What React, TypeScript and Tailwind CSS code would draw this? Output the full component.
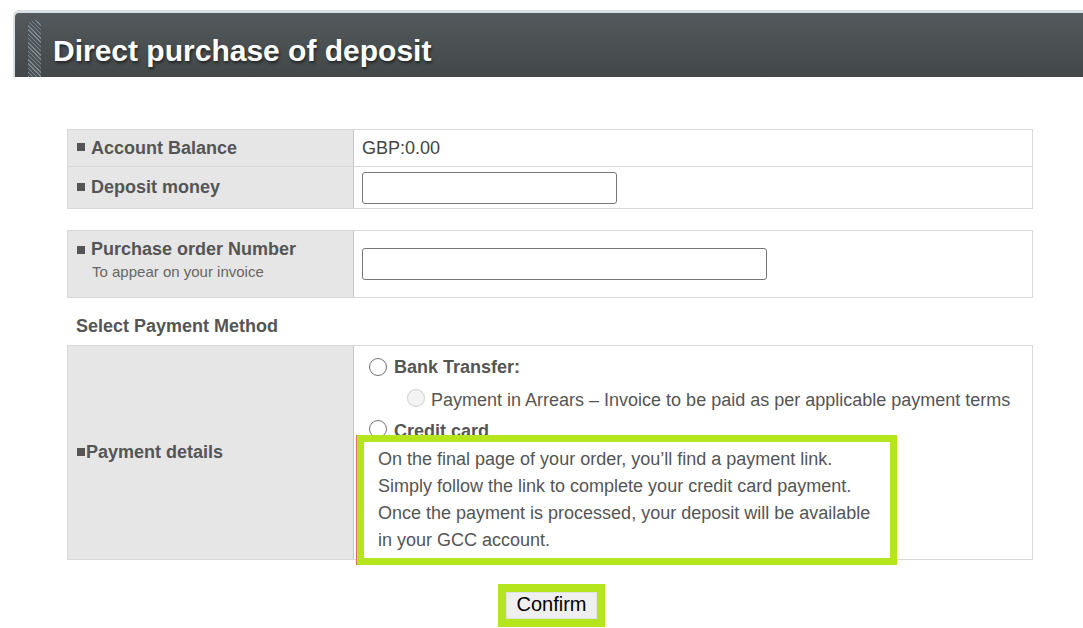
import React from "react";

function Square() {
  return <span className="mr-[6px] inline-block h-[8px] w-[8px] translate-y-[-1px] bg-[#555]" />;
}

function Radio({ disabled }: { disabled?: boolean }) {
  return (
    <input
      type="radio"
      name={disabled ? "sub" : "pay"}
      disabled={disabled}
      className={`h-[18px] w-[18px] shrink-0 appearance-none rounded-full border-[1.5px] ${
        disabled ? "border-[#cfcfcf] bg-[#f3f3f3]" : "border-[#737373] bg-white"
      }`}
    />
  );
}

export default function App() {
  return (
    <div className="min-h-[628px] w-full overflow-hidden bg-white font-['Liberation_Sans',Arial,sans-serif] text-[#555]">
      {/* Cabeçalho */}
      <div className="pl-[13px] pt-[10px]">
        <div className="rounded-tl-[6px] border-l-2 border-t-[3px] border-[#d9dfe2]">
          <div className="flex h-[64px] items-start rounded-tl-[4px] bg-gradient-to-b from-[#53595c] to-[#434748] pl-[13px]">
            <div className="mt-[7px] h-[57px] w-[13px] rounded-t-[6px] bg-[repeating-linear-gradient(45deg,#7b8891_0px,#7b8891_1px,#4e5558_1px,#4e5558_3px)]" />
            <h1 className="ml-[12px] mt-[23px] text-[30px] font-bold leading-[30px] text-white [text-shadow:1px_2px_3px_rgba(0,0,0,0.55)]">
              Direct purchase of deposit
            </h1>
          </div>
        </div>
      </div>

      <div className="ml-[67px] w-[966px]">
        {/* Saldo e depósito */}
        <div className="mt-[52px] border border-[#d9d9d9]">
          <div className="flex h-[37px] border-b border-[#d9d9d9]">
            <div className="flex w-[286px] items-center border-r border-[#c6c6c6] bg-[#e6e6e6] pl-[9px] text-[18px] font-bold">
              <Square />
              Account Balance
            </div>
            <div className="flex items-center pl-[8px] text-[18px] text-[#444]">GBP:0.00</div>
          </div>
          <div className="flex h-[41px]">
            <div className="flex w-[286px] items-center border-r border-[#c6c6c6] bg-[#e6e6e6] pl-[9px] text-[18px] font-bold">
              <Square />
              Deposit money
            </div>
            <div className="flex items-center pl-[8px]">
              <input type="text" className="h-[32px] w-[255px] rounded-[3px] border border-[#767676] bg-white" />
            </div>
          </div>
        </div>

        {/* Número do pedido */}
        <div className="mt-[21px] flex h-[68px] border border-[#d9d9d9]">
          <div className="w-[286px] border-r border-[#c6c6c6] bg-[#e6e6e6] pl-[9px] pt-[7px]">
            <div className="text-[18px] font-bold leading-[22px]">
              <Square />
              Purchase order Number
            </div>
            <div className="pl-[15px] text-[15px] leading-[24px] text-[#666]">To appear on your invoice</div>
          </div>
          <div className="flex items-center pl-[8px]">
            <input type="text" className="h-[32px] w-[405px] rounded-[3px] border border-[#767676] bg-white" />
          </div>
        </div>

        <div className="mt-[16px] pl-[9px] text-[18px] font-bold leading-[24px]">Select Payment Method</div>

        {/* Forma de pagamento */}
        <div className="mt-[7px] flex h-[215px] border border-[#d9d9d9]">
          <div className="flex w-[286px] items-center border-r border-[#c6c6c6] bg-[#e6e6e6] pl-[9px] text-[18px] font-bold">
            <Square />
            <span className="-ml-[5px]">Payment details</span>
          </div>
          <div className="relative flex-1 pl-[15px] pt-[6px]">
            <label className="flex h-[30px] items-center gap-[7px] text-[18px] font-bold">
              <Radio />
              Bank Transfer:
            </label>
            <label className="flex h-[32px] items-center gap-[6px] pl-[38px] text-[18px]">
              <Radio disabled />
              <span className="translate-y-[2px]">Payment in Arrears – Invoice to be paid as per applicable payment terms</span>
            </label>
            <label className="flex h-[30px] items-center gap-[7px] text-[18px] font-bold">
              <Radio />
              <span className="translate-y-[2px]">Credit card</span>
            </label>

            <div className="absolute left-[3px] top-[89px] h-[130px] w-[540px] border-[7px] border-[#b5e61d] bg-white pl-[14px] pt-[4px] text-[18px] leading-[27px] shadow-[-1px_0_0_#e07070]">
              <p>On the final page of your order, you’ll find a payment link.</p>
              <p>Simply follow the link to complete your credit card payment.</p>
              <p>Once the payment is processed, your deposit will be available</p>
              <p>in your GCC account.</p>
            </div>
          </div>
        </div>

        {/* Botão */}
        <div className="mt-[24px] flex justify-center pl-[3px]">
          <div className="bg-[#b5e61d] p-[8px]">
            <button className="flex h-[27px] w-[91px] items-center justify-center border border-[#e2e2e2] bg-[#efefef] pb-[3px] text-[20px] leading-[20px] text-black">
              Confirm
            </button>
          </div>
        </div>
      </div>
    </div>
  );
}
